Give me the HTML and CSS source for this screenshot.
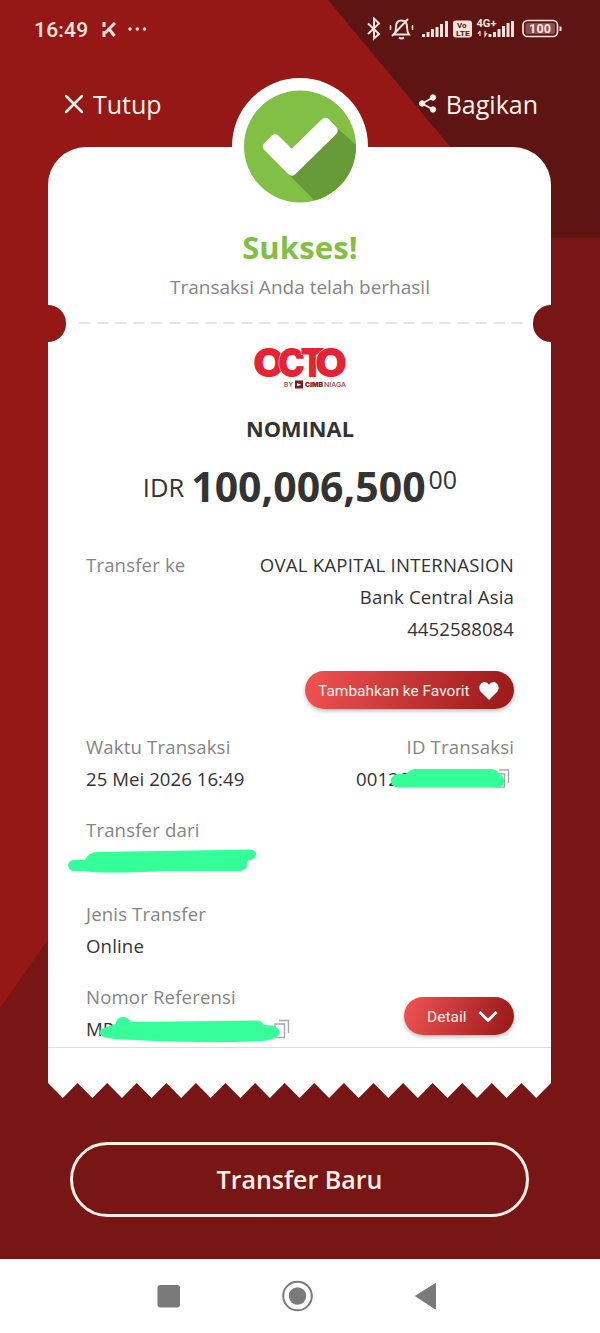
FILE: index.html
```html
<!DOCTYPE html>
<html lang="id">
<head>
<meta charset="utf-8">
<title>Transfer</title>
<link rel="stylesheet" href="styles.css">
</head>
<body>
<div class="screen">
  <svg class="backdrop" viewBox="0 0 600 1259">
    <rect width="600" height="1259" fill="#781515"/>
    <path d="M0 0H540V238L0 1008Z" fill="#961816"/>
    <path d="M328 0H600V238H526Z" fill="#5e1412"/>
  </svg>

  <header class="status">
    <span class="clock">16:49</span>
    <svg class="k-icon" width="14" height="15" viewBox="0 0 14 15" fill="none" stroke="#fbe3dc"><path d="M2 0V5M2 9V15" stroke-width="3"/><path d="M13 1L3 11M7 7L12.500 14" stroke-width="3"/></svg>
    <svg class="dots" width="19" height="4" viewBox="0 0 19 4" fill="#fbe3dc"><circle cx="2" cy="2" r="1.700"/><circle cx="9.300" cy="2" r="1.700"/><circle cx="16.600" cy="2" r="1.700"/></svg>
    <svg class="tray" width="196" height="24" viewBox="366 17 196 24" fill="none" stroke="#fbe3dc">
      <path d="M368 23.500L379 34L374 38.500V18.500L379 23.500L368 34" stroke-width="2"/>
      <path d="M394 34.500H409Q407 32 407 27Q407 20.500 401.500 20.500T396 27Q396 32 394 34.500M392 36L408 19M399 37.500Q401.500 39.500 404 37.500" stroke-width="1.900"/>
      <path d="M390.500 25V30M412.500 25V30" stroke-width="1.500"/>
      <path d="M423.500 37V34M428 37V32M432.500 37V29M437 37V27M441.500 37V24M446.500 37V21" stroke-width="3"/>
      <rect x="453" y="20.500" width="19" height="17" rx="3" fill="#fbe3dc" stroke="none"/>
      <path d="M490 37V34M494.500 37V32M499 37V29M503.500 37V26M508 37V23M512.500 37V21" stroke-width="3"/>
      <path d="M480 36V31M478 34L480 31M485 31V36L487 33" stroke-width="1.200"/>
      <rect x="523" y="20.500" width="34.500" height="16" rx="4.500" stroke-width="1.700"/>
      <rect x="525.500" y="23" width="29.500" height="11" rx="2" fill="#875050" stroke="none"/>
      <path d="M560.500 26.500V31" stroke-width="2"/>
      <g fill="#fbe3dc" stroke="none" class="tray-text">
        <text x="529" y="33" font-size="12.500" textLength="22">100</text>
        <text x="476.500" y="27" font-size="10.500" textLength="20" lengthAdjust="spacingAndGlyphs">4G+</text>
        <text x="457" y="28" font-size="8" fill="#5e1412">Vo</text>
        <text x="456" y="36" font-size="8" textLength="14" lengthAdjust="spacingAndGlyphs" fill="#5e1412">LTE</text>
      </g>
    </svg>
  </header>

  <nav class="actions">
    <span class="action"><svg width="20" height="20" viewBox="0 0 20 20" fill="none" stroke="#fff3ea" stroke-width="2.500" stroke-linecap="round"><path d="M2 2L18 18M18 2L2 18"/></svg><span class="close-label">Tutup</span></span>
    <span class="action share"><svg width="19" height="20" viewBox="0 0 19 20" fill="#fff3ea" stroke="#fff3ea"><path d="M15 3.500L4 9.500L15 15.500" fill="none" stroke-width="1.800"/><circle cx="15" cy="3.500" r="2.700"/><circle cx="4" cy="9.500" r="2.700"/><circle cx="15" cy="15.500" r="2.700"/></svg><span class="share-label">Bagikan</span></span>
  </nav>

  <main class="ticket">
    <svg class="badge" width="136" height="136" viewBox="232 78 136 136">
      <defs><clipPath id="disc"><circle cx="300" cy="146.500" r="56"/></clipPath></defs>
      <circle cx="300" cy="146" r="68" fill="#fff"/>
      <circle cx="300" cy="146.500" r="56" fill="#82c045"/>
      <path d="M336 127L390 175L350 236L288 174Z" fill="#679b37" clip-path="url(#disc)"/>
      <path d="M267.500 146.500L275 139L291.700 155.500L325.500 122.500L333 130.500L291.700 171Z" fill="#fff" stroke="#fff" stroke-width="9.500" stroke-linejoin="round"/>
    </svg>
    <i class="notch notch-left"></i><i class="notch notch-right"></i>
    <div class="paper">
      <h1 class="result">Sukses!</h1>
      <p class="message">Transaksi Anda telah berhasil</p>
      <svg class="perforation" width="444" height="2" viewBox="0 0 444 2"><path d="M0 1H444" stroke="#dedede" stroke-width="1.500" stroke-dasharray="11.500 6.520"/></svg>
      <svg class="logo" width="94" height="46" viewBox="253 344 94 46">
        <g class="wordmark">
          <text x="253" y="375.500" textLength="32" lengthAdjust="spacingAndGlyphs">O</text>
          <text x="278" y="375.500" textLength="27" lengthAdjust="spacingAndGlyphs">C</text>
          <text x="300.500" y="375.500" textLength="24" lengthAdjust="spacingAndGlyphs">T</text>
          <text x="315" y="375.500" textLength="32" lengthAdjust="spacingAndGlyphs">O</text>
        </g>
        <rect x="295" y="379.500" width="8" height="8" fill="#7b1925"/>
        <path d="M297 382L301.500 384L297 385" fill="#fff"/>
        <text class="byline" x="284" y="386.300" textLength="9">BY</text>
        <text class="byline bank" x="305" y="386.300" textLength="18" lengthAdjust="spacingAndGlyphs">CIMB</text>
        <text class="byline" x="324" y="386.300" textLength="22" lengthAdjust="spacingAndGlyphs">NIAGA</text>
      </svg>
      <h2 class="caption">NOMINAL</h2>
      <div class="amount"><span class="currency">IDR</span><strong class="figure">100,006,500</strong><span class="cents">00</span></div>

      <section class="row recipient">
        <span class="label">Transfer ke</span>
        <div class="right"><div class="payee">OVAL KAPITAL INTERNASION</div><div>Bank Central Asia</div><div class="account">4452588084</div></div>
      </section>
      <button class="pill favorite">Tambahkan ke Favorit<svg width="20" height="18" viewBox="0 0 20 18" fill="#fff"><path d="M10 18L2 10C-2 5 2 0 5.500 0Q8.500 0 10 2.700Q11.500 0 14.500 0C18 0 22 5 18 10Z"/></svg></button>
      <section class="row ids">
        <div><div class="label">Waktu Transaksi</div><div class="time">25 Mei 2026 16:49</div></div>
        <div class="right"><div class="label">ID Transaksi</div>
          <div class="masked id-code">00129
            <svg class="scribble" width="124" height="24" viewBox="388 766 124 24"><g fill="none" stroke="#aaa" stroke-width="1.400"><path d="M499 770H508.500V783"/><path d="M495 774H504.500V787H495Z"/></g><path d="M399 774H406Q410 769 417 769H490Q497 769 499 774Q505 776 504 783Q502 788 493 787.500H400C388 788 388 774 399 774Z" fill="#35ff99"/></svg>
          </div></div>
      </section>
      <section class="source"><div class="label">Transfer dari</div>
        <svg class="source-scribble" width="190" height="24" viewBox="67 849 190 24"><path d="M73 860H85Q89 852 97 852L250 849.500C259 850 258 859 247 861C248 868 245 871 238 871H165Q100 874 84 871H73C67 870 66 861 73 860Z" fill="#35ff99"/></svg>
      </section>
      <section class="kind"><div class="label">Jenis Transfer</div><div>Online</div></section>
      <section class="row reference">
        <div><div class="label">Nomor Referensi</div>
          <div class="masked">MP
            <svg class="ref-scribble" width="194" height="30" viewBox="98 1014 194 30"><g fill="none" stroke="#aaa" stroke-width="1.400"><path d="M279 1020.500H288.500V1033"/><path d="M275 1024H284.500V1037.500H275Z"/></g><path d="M104 1028L116 1023.500C116 1015 128 1015 131 1022L258 1020.500Q262 1021 264 1025C275 1025 279 1028 279.500 1032Q279 1039 262 1041Q190 1044 115 1039Q99 1038 99.500 1032Q100 1029 104 1028Z" fill="#35ff99"/></svg>
          </div></div>
        <button class="pill detail">Detail<svg width="20" height="13" viewBox="0 0 20 13" fill="none" stroke="#fff" stroke-width="3"><path d="M1.500 2L10 10.500L18.500 2"/></svg></button>
      </section>
    </div>
    <svg class="teeth" viewBox="0 0 510 16" preserveAspectRatio="none"><path d="M0 0H510L495 15L480 0L465 15L450 0L435 15L420 0L405 15L390 0L375 15L360 0L345 15L330 0L315 15L300 0L285 15L270 0L255 15L240 0L225 15L210 0L195 15L180 0L165 15L150 0L135 15L120 0L105 15L90 0L75 15L60 0L45 15L30 0L15 15Z" fill="#fff"/></svg>
  </main>

  <button class="again">Transfer Baru</button>
  <footer class="system">
    <svg width="600" height="74" viewBox="0 1259 600 74" fill="#7a7a7a"><rect x="157.500" y="1285" width="22.500" height="22.500" rx="3"/><circle cx="297.500" cy="1296" r="14.300" fill="none" stroke="#7a7a7a" stroke-width="2"/><circle cx="297.500" cy="1296" r="8.700"/><path d="M415.500 1296L435.500 1283.500V1309Z" stroke="#7a7a7a" stroke-linejoin="round"/></svg>
  </footer>
</div>
</body>
</html>
```
FILE: styles.css
```css
* { box-sizing: border-box; margin: 0; padding: 0; }
body { background: #fff; font-family: "Open Sans", "Noto Sans", sans-serif; color: #333; }
button { font: inherit; border: 0; }
svg { display: block; flex: none; }
.screen { position: relative; width: 600px; height: 1333px; overflow: hidden; display: flex; flex-direction: column; isolation: isolate; }
.backdrop { position: absolute; top: 0; left: 0; width: 600px; height: 1259px; z-index: -1; }
.status { display: flex; align-items: center; height: 58px; padding: 0 38px 0 34px; color: #fbe3dc; }
.clock { font: 500 21px Roboto, sans-serif; width: 68px; letter-spacing: .2px; padding-top: 1px; }
.dots { margin-left: 12px; }
.tray { margin-left: auto; }
.tray-text { font-family: Roboto, sans-serif; font-weight: 700; }
.actions { display: flex; justify-content: space-between; height: 89px; padding: 29px 62px 0 64px; color: #fff3ea; font-size: 25px; line-height: 34px; }
.action { display: flex; align-items: center; height: 34px; gap: 9px; }
.ticket { position: relative; width: 503px; height: 952px; margin-left: 48px; display: flex; flex-direction: column; }
.badge { position: absolute; left: 184px; top: -69px; }
.notch { position: absolute; top: 158px; width: 18px; height: 37px; }
.notch-left { left: 0; background: #961816; border-radius: 0 19px 19px 0; }
.notch-right { right: 0; background: #781515; border-radius: 19px 0 0 19px; }
.paper { height: 936px; background: #fff; border-radius: 38px 38px 0 0; padding: 80px 37px 0 38px; font-size: 18.6px; letter-spacing: .15px; line-height: 32px; }
.notch, .badge { z-index: 1; }
.teeth { width: 503px; height: 16px; }
.result { color: #82c045; text-align: center; font-size: 31px; line-height: 40px; font-weight: 700; }
.message { color: #858585; text-align: center; font-size: 19px; letter-spacing: 0; line-height: 40px; }
.perforation { margin: 15px 0 0 -7px; }
.logo { margin: 21px auto 0; overflow: visible; }
.wordmark { font: 900 40px Inter, sans-serif; letter-spacing: 0; fill: #e82235; stroke: #fff; stroke-width: 1px; paint-order: stroke; }
.byline { font: 500 6.5px Inter, sans-serif; letter-spacing: 0; fill: #963840; }
.bank { font-weight: 900; fill: #7b1925; }
.caption { margin-top: 18px; font-size: 21.8px; letter-spacing: 0; line-height: 40px; font-weight: 700; text-align: center; }
.amount { display: flex; justify-content: center; height: 60px; margin-top: 7px; line-height: 60px; letter-spacing: 0; }
.currency { font-size: 25.5px; padding-top: 1px; margin-right: 7px; }
.figure { font-size: 41px; }
.cents { font-size: 25px; line-height: 47px; margin-left: 3px; }
.row { display: flex; justify-content: space-between; }
.label { color: #858585; }
.right { text-align: right; }
.recipient { margin-top: 33px; }
.payee { letter-spacing: .23px; }
.account, .time { letter-spacing: .05px; }
.pill { display: flex; align-items: center; color: #fff0e7; font-family: Roboto, sans-serif; letter-spacing: 0; height: 38px; border-radius: 19px; background: linear-gradient(105deg, #ed5050 5%, #9c1b1b 95%); box-shadow: 0 2px 4px #0004; }
.favorite { width: 209px; margin: 26px 0 0 auto; padding: 1px 0 0 13px; gap: 9px; font-size: 15.5px; }
.ids { margin-top: 22px; }
.masked { position: relative; }
.id-code { text-align: left; width: 158px; }
.ids .right { width: 158px; }
.scribble { position: absolute; left: 32px; top: 3px; }
.source { height: 64px; margin-top: 19px; }
.source-scribble { margin-left: -19px; margin-top: 3px; }
.kind { margin-top: 20px; }
.reference { margin-top: 19px; height: 67px; margin-left: -38px; margin-right: -37px; padding: 0 37px 0 38px; border-bottom: 1px solid #ddd; }
.ref-scribble { position: absolute; left: 12px; top: 1px; }
.detail { width: 110px; margin-top: 16px; padding: 1px 0 0 23px; gap: 12px; font-size: 15.5px; }
.again { flex: none; width: 459px; height: 75px; margin: 43px 0 0 70px; padding-bottom: 2px; border: 3px solid #fff0e7; border-radius: 38px; background: transparent; color: #fff0e7; font-size: 25px; font-weight: 600; }
.system { margin-top: auto; height: 74px; background: #fff; }
```
